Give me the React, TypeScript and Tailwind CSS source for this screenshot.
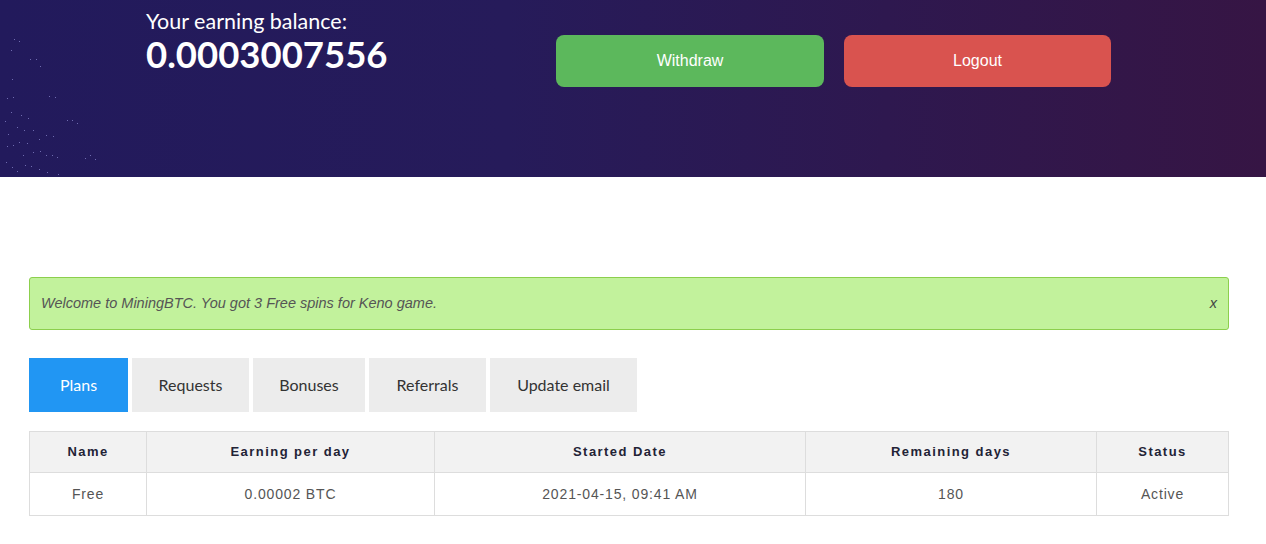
import React from "react";

const DOTS: [number, number][] = [
  [14, 39], [19, 41], [11, 50], [30, 59], [36, 59], [40, 66], [12, 79], [7, 98],
  [13, 97], [49, 96], [55, 97], [11, 112], [5, 121], [21, 115], [28, 118], [67, 120],
  [72, 120], [77, 123], [17, 127], [24, 130], [33, 130], [8, 134], [46, 135], [53, 136],
  [39, 139], [19, 142], [27, 143], [7, 146], [13, 145], [23, 155], [33, 152], [40, 151],
  [46, 155], [52, 155], [57, 157], [85, 158], [90, 155], [95, 159], [6, 162], [12, 167],
  [25, 165], [31, 166], [17, 171], [39, 169], [47, 172], [58, 174],
];

const TABS = ["Plans", "Requests", "Bonuses", "Referrals", "Update email"];
const TAB_W = ["w-[99px]", "w-[117px]", "w-[112px]", "w-[117px]", "w-[147px]"];

const COLS = [
  { label: "Name", w: "w-[117px]", value: "Free" },
  { label: "Earning per day", w: "w-[288px]", value: "0.00002 BTC" },
  { label: "Started Date", w: "w-[371px]", value: "2021-04-15, 09:41 AM" },
  { label: "Remaining days", w: "w-[291px]", value: "180" },
  { label: "Status", w: "", value: "Active" },
];

function Header() {
  return (
    <div className="relative h-[177px] w-full bg-[linear-gradient(90deg,#221a5c_0%,#261b5a_40%,#361544_100%)]">
      <svg className="absolute left-0 top-0" width="120" height="177">
        {DOTS.map(([x, y], i) => (
          <rect key={i} x={x} y={y} width="1" height="1" fill="#6f6bb0" />
        ))}
      </svg>
      <div className="relative flex pl-[146px] pt-[8px]">
        <div className="w-[410px] text-white [font-family:Lato,sans-serif]">
          <p className="text-[21.5px] leading-[27px]">Your earning balance:</p>
          <p className="text-[36.5px] font-bold leading-[38px]">0.0003007556</p>
        </div>
        <div className="mt-[27px] flex gap-[20px] [font-family:'Liberation_Sans',Arial,sans-serif]">
          <button className="h-[52px] w-[268px] rounded-[8px] bg-[#5cb85c] text-[16px] text-white">
            Withdraw
          </button>
          <button className="h-[52px] w-[267px] rounded-[8px] bg-[#d9534f] text-[16px] text-white">
            Logout
          </button>
        </div>
      </div>
    </div>
  );
}

export default function App() {
  return (
    <div className="min-h-[544px] bg-white">
      <Header />
      <div className="ml-[29px] w-[1200px] pt-[100px]">
        <div className="flex h-[53px] items-center justify-between rounded-[3px] border border-[#8ccf4d] bg-[#c2f29c] pl-[11px] pr-[11px] text-[14.5px] italic text-[#555] [font-family:'Liberation_Sans',Arial,sans-serif]">
          <span>Welcome to MiningBTC. You got 3 Free spins for Keno game.</span>
          <span className="text-[#444]">x</span>
        </div>

        <div className="mt-[28px] flex gap-[4px] [font-family:Lato,sans-serif]">
          {TABS.map((t, i) => (
            <div
              key={t}
              className={
                "flex h-[54px] items-center justify-center text-[16px] " +
                TAB_W[i] +
                (i === 0 ? " bg-[#2196f3] text-white" : " bg-[#ececec] text-[#333]")
              }
            >
              {t}
            </div>
          ))}
        </div>

        <div className="mt-[19px] border border-[#dddddd] [font-family:'Liberation_Sans',Arial,sans-serif]">
          <div className="flex h-[41px] border-b border-[#dddddd] bg-[#f2f2f2]">
            {COLS.map((c, i) => (
              <div
                key={c.label}
                className={
                  "flex items-center justify-center text-[13px] font-bold tracking-[1.45px] text-[#232336] " +
                  (c.w || "flex-1") +
                  (i < COLS.length - 1 ? " border-r border-[#dddddd]" : "")
                }
              >
                {c.label}
              </div>
            ))}
          </div>
          <div className="flex h-[42px]">
            {COLS.map((c, i) => (
              <div
                key={c.label}
                className={
                  "flex items-center justify-center text-[14px] tracking-[0.85px] text-[#555] " +
                  (c.w || "flex-1") +
                  (i < COLS.length - 1 ? " border-r border-[#dddddd]" : "")
                }
              >
                {c.value}
              </div>
            ))}
          </div>
        </div>
      </div>
    </div>
  );
}
